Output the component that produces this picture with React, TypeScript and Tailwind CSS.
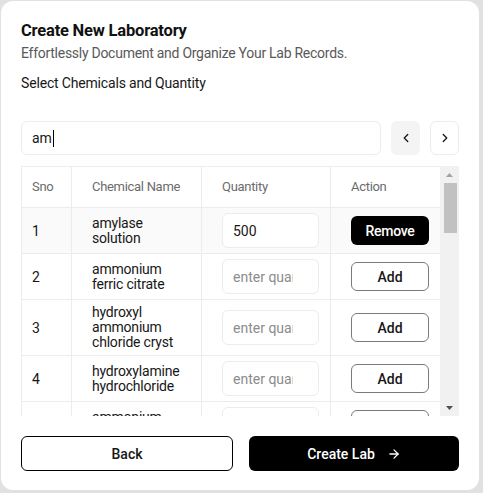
import React from 'react';
import { ChevronLeft, ChevronRight, ArrowRight } from 'lucide-react';

// Rows shown in the chemical picker
interface ChemicalRow {
  sno: number;
  name: string;
  quantity?: string;
  selected?: boolean;
}

const rows: ChemicalRow[] = [
  { sno: 1, name: 'amylase solution', quantity: '500', selected: true },
  { sno: 2, name: 'ammonium ferric citrate' },
  { sno: 3, name: 'hydroxyl ammonium chloride cryst' },
  { sno: 4, name: 'hydroxylamine hydrochloride' },
  { sno: 5, name: 'ammonium chloride' },
  { sno: 6, name: 'ammonium sulphate' },
];

const cols = 'grid grid-cols-[50px_130px_129px_109px]';

const Row: React.FC<{ row: ChemicalRow }> = ({ row }) => {
  return (
    <div className={`${cols} border-b border-[#ececec] ${row.selected ? 'bg-[#fafafa]' : 'bg-white'}`}>
      <div className="flex items-center border-r border-[#ececec] pl-[10px] text-sm text-[#171717]">{row.sno}</div>
      <div className="flex items-center border-r border-[#ececec] pl-5 pr-[11px] py-[5px] text-sm leading-[15px] tracking-[-0.2px] text-[#171717]">
        <span className="w-[98px]">{row.name}</span>
      </div>
      <div className="flex items-center border-r border-[#ececec] pl-5 pr-[11px] py-[5px]">
        <input
          type="number"
          className="h-[35px] w-full rounded-md border border-[#ececec] bg-white px-[10px] text-sm text-[#171717] outline-none placeholder:text-[#8c8c8c]"
          placeholder="enter quantity"
          defaultValue={row.quantity}
        />
      </div>
      <div className="flex items-center pl-5 pr-[10px]">
        {row.selected ? (
          <button className="h-[29px] w-[78px] rounded-md bg-black text-sm font-medium tracking-[-0.3px] text-white">Remove</button>
        ) : (
          <button className="h-[29px] w-[78px] rounded-md border border-[#7a7a7a] bg-white text-sm font-medium text-[#171717]">Add</button>
        )}
      </div>
    </div>
  );
};

// Classic scrollbar next to the table
const Scrollbar: React.FC = () => (
  <div className="flex w-[19px] flex-col bg-[#f1f1f1]">
    <div className="flex h-[17px] items-center justify-center">
      <svg width="7" height="4" viewBox="0 0 7 4"><polygon points="3.5,0 7,4 0,4" fill="#a3a3a3" /></svg>
    </div>
    <div className="ml-[4px] h-[50px] w-[13px] bg-[#c1c1c1]" />
    <div className="flex-1" />
    <div className="flex h-[17px] items-center justify-center">
      <svg width="7" height="4" viewBox="0 0 7 4"><polygon points="0,0 7,0 3.5,4" fill="#505050" /></svg>
    </div>
  </div>
);

export default function App() {
  return (
    <div className="h-[493px] w-[483px] overflow-hidden bg-[#e1e1e1] pt-px font-['Roboto',sans-serif]">
      <div className="ml-px flex h-[489px] w-[478px] flex-col rounded-xl bg-white px-5 pt-[18px] pb-[19px]">
        <h1 className="text-[16.5px] leading-6 font-bold tracking-[-0.2px] text-[#111]">Create New Laboratory</h1>
        <p className="text-sm leading-5 tracking-[-0.27px] text-[#595959]">Effortlessly Document and Organize Your Lab Records.</p>
        <p className="mt-[10px] text-sm leading-5 tracking-[-0.17px] text-[#171717]">Select Chemicals and Quantity</p>

        <div className="mt-7 flex gap-2.5">
          <div className="flex h-[34px] flex-1 items-center rounded-md border border-[#ececec] pl-[10px] text-sm text-[#171717]">
            am<span className="ml-px h-[17px] w-px bg-black" />
          </div>
          <button className="flex h-[34px] w-[29px] items-center justify-center rounded-md bg-[#f4f4f5] text-[#171717]">
            <ChevronLeft size={14} strokeWidth={2.2} />
          </button>
          <button className="flex h-[34px] w-[29px] items-center justify-center rounded-md border border-[#ececec] bg-white text-[#171717]">
            <ChevronRight size={14} strokeWidth={2.2} />
          </button>
        </div>

        <div className="mt-[11px] flex h-[250px]">
          <div className="flex-1 overflow-hidden border-t border-l border-[#ececec]">
            <div className={`${cols} h-[41px] border-b border-[#ececec] text-[13px] tracking-[-0.3px] text-[#6b6b6b]`}>
              <div className="flex items-center border-r border-[#ececec] pl-[10px]">Sno</div>
              <div className="flex items-center border-r border-[#ececec] pl-5">Chemical Name</div>
              <div className="flex items-center border-r border-[#ececec] pl-5">Quantity</div>
              <div className="flex items-center pl-5">Action</div>
            </div>
            {rows.map((r) => (
              <Row key={r.sno} row={r} />
            ))}
          </div>
          <Scrollbar />
        </div>

        <div className="mt-5 flex gap-4">
          <button className="h-[35px] flex-1 rounded-md border border-black bg-white text-sm font-medium text-[#171717]">Back</button>
          <button className="flex h-[35px] flex-1 items-center justify-center rounded-md bg-black text-sm font-medium text-white">
            Create Lab
            <ArrowRight size={14} strokeWidth={2.2} className="ml-3" />
          </button>
        </div>
      </div>
    </div>
  );
}
